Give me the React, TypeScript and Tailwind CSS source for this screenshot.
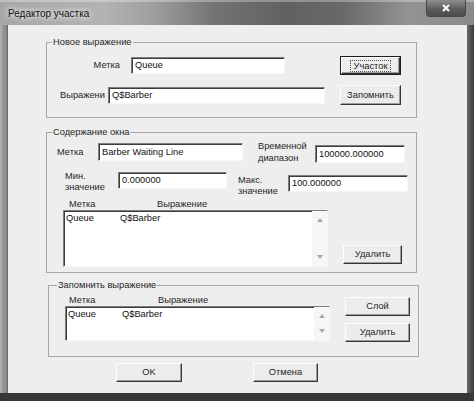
import type { ReactNode } from "react";

type Props = { className?: string; children?: ReactNode };

function Group({ title, legend, className, children }: Props & { title: string; legend: string }) {
  return (
    <fieldset className={`border border-[#a6a6a6] p-0 m-0 min-w-0 ${className}`}>
      <legend className={`${legend} px-[1px] h-[13px] leading-[13px]`}>{title}</legend>
      {children}
    </fieldset>
  );
}

function Field({ className, children }: Props) {
  return (
    <div
      className={`flex items-center whitespace-nowrap pl-[3px] bg-white text-[#111] border border-t-[#7c7c7c] border-l-[#7c7c7c] border-r-[#f6f6f6] border-b-[#f6f6f6] shadow-[inset_1px_1px_0_#3c3c3c] ${className}`}
    >
      {children}
    </div>
  );
}

function Btn({ className, children }: Props) {
  return (
    <div
      className={`flex items-center justify-center bg-[#ececec] border border-t-[#fdfdfd] border-l-[#fdfdfd] border-r-[#363636] border-b-[#363636] shadow-[inset_-1px_-1px_0_#9c9c9c] ${className}`}
    >
      {children}
    </div>
  );
}

function DefaultBtn({ className, children }: Props) {
  return (
    <div className={`flex border border-[#1e1e1e] ${className}`}>
      <Btn className="flex-1">
        <span className="border border-dotted border-[#555] px-[3px] leading-[10px]">{children}</span>
      </Btn>
    </div>
  );
}

function ListBox({ className }: Props) {
  return (
    <div
      className={`flex bg-white text-[#111] border border-t-[#7c7c7c] border-l-[#7c7c7c] border-r-[#f6f6f6] border-b-[#f6f6f6] shadow-[inset_1px_1px_0_#3c3c3c] ${className}`}
    >
      <div className="flex-1 pl-[2px] pt-[2px]">
        <div className="flex h-[11px]">
          <span className="w-[54px]">Queue</span>
          <span>Q$Barber</span>
        </div>
      </div>
      <div className="w-[15px] bg-[#f6f6f6] flex flex-col items-center justify-between py-[7px]">
        <svg width="6" height="4" viewBox="0 0 6 4">
          <polygon points="3,0 6,4 0,4" fill="#a8a8a8" />
        </svg>
        <svg width="6" height="4" viewBox="0 0 6 4">
          <polygon points="0,0 6,0 3,4" fill="#a8a8a8" />
        </svg>
      </div>
    </div>
  );
}

export default function App() {
  return (
    <div className="w-[474px] h-[401px] flex flex-col bg-[#3c3c3c] overflow-hidden font-['Liberation_Sans',Arial,sans-serif] text-[9.3px] leading-[11px] text-[#262626]">
      {/* title bar */}
      <div className="h-[25px] flex items-start bg-[linear-gradient(to_right,#a6a6a6_0%,#b3b3b3_22%,#9d9d9d_33%,#747474_45%,#616161_60%,#686868_72%,#939393_86%,#8a8a8a_100%)] shadow-[inset_0_2px_0_rgba(255,255,255,0.3)]">
        <span className="ml-[8px] mt-[8px] text-[10px] leading-[12px] text-[#111] [text-shadow:0_0_5px_#fff,0_0_8px_#fff]">
          Редактор участка
        </span>
        <div className="ml-auto mr-[8px] w-[40px] h-[17px] flex items-center justify-center rounded-b-[4px] border border-t-0 border-[#474747] bg-[linear-gradient(to_bottom,#8e8e8e,#5e5e5e_55%,#4c4c4c)]">
          <svg width="10" height="8" viewBox="0 0 10 8">
            <path d="M2 1 L8 7 M8 1 L2 7" stroke="#fff" strokeWidth="2" />
          </svg>
        </div>
      </div>

      <div className="flex h-[368px]">
        <div className="w-[8px] bg-[linear-gradient(to_right,#b4b4b4,#949494_40%,#8a8a8a_80%,#5c5c5c)]" />
        <div className="w-[459px] h-[368px] bg-[#eeeeee] flex flex-col">
          <Group title="Новое выражение" legend="ml-[5px]" className="ml-[38px] mt-[11px] w-[371px] h-[82px]">
            <div className="flex items-center mt-[7px] h-[19px]">
              <div className="w-[73px] text-right">Метка</div>
              <Field className="ml-[11px] w-[154px] h-[17px]">Queue</Field>
              <DefaultBtn className="ml-[55px] w-[61px] h-[19px]">Участок</DefaultBtn>
            </div>
            <div className="flex items-center mt-[10px] h-[20px]">
              <div className="w-[61px] pl-[13px] whitespace-nowrap overflow-hidden">Выражени</div>
              <Field className="w-[217px] h-[17px]">Q$Barber</Field>
              <Btn className="ml-[15px] w-[61px] h-[20px]">Запомнить</Btn>
            </div>
          </Group>

          <Group title="Содержание окна" legend="ml-[5px]" className="ml-[38px] mt-[8px] w-[371px] h-[147px]">
            <div className="flex items-start mt-[1px]">
              <div className="ml-[10px] w-[41px] h-[18px] mt-[3px] flex items-center">Метка</div>
              <Field className="mt-[3px] w-[145px] h-[18px]">Barber Waiting Line</Field>
              <div className="ml-[15px] w-[57px] leading-[12px]">
                Временной
                <br />
                диапазон
              </div>
              <Field className="mt-[5px] w-[90px] h-[18px]">100000.000000</Field>
            </div>
            <div className="flex items-start mt-[7px]">
              <div className="ml-[18px] w-[53px] leading-[11px]">
                Мин.
                <br />
                значение
              </div>
              <Field className="mt-[1px] w-[109px] h-[17px]">0.000000</Field>
              <div className="ml-[11px] w-[50px] mt-[4px] leading-[11px]">
                Макс.
                <br />
                значение
              </div>
              <Field className="mt-[4px] w-[120px] h-[17px]">100.000000</Field>
            </div>
            <div className="flex mt-[2px] h-[11px]">
              <div className="ml-[22px] w-[88px]">Метка</div>
              <div>Выражение</div>
            </div>
            <div className="flex items-start">
              <ListBox className="ml-[16px] w-[265px] h-[57px]" />
              <Btn className="ml-[15px] mt-[35px] w-[59px] h-[19px]">Удалить</Btn>
            </div>
          </Group>

          <Group title="Запомнить выражение" legend="ml-[8px]" className="ml-[40px] mt-[6px] w-[371px] h-[78px]">
            <div className="flex items-start">
              <div className="ml-[16px] w-[265px] flex flex-col">
                <div className="flex mt-[3px] h-[11px] pl-[4px]">
                  <div className="w-[89px]">Метка</div>
                  <div>Выражение</div>
                </div>
                <ListBox className="h-[35px]" />
              </div>
              <div className="ml-[15px] mt-[5px] w-[65px] flex flex-col">
                <Btn className="h-[19px]">Слой</Btn>
                <Btn className="mt-[7px] h-[19px]">Удалить</Btn>
              </div>
            </div>
          </Group>

          <div className="flex mt-[6px]">
            <Btn className="ml-[108px] w-[66px] h-[19px]">OK</Btn>
            <Btn className="ml-[71px] w-[65px] h-[19px]">Отмена</Btn>
          </div>
        </div>
        <div className="w-[7px] bg-[linear-gradient(to_right,#6a6a6a,#3a3a3a)]" />
      </div>
      <div className="h-[8px] bg-[#383838]" />
    </div>
  );
}
